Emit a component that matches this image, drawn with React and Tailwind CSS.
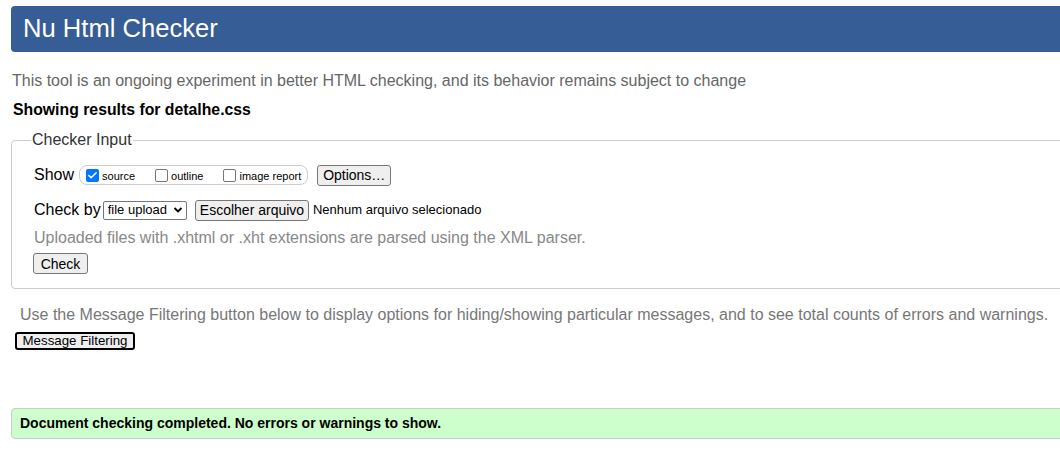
import { Check } from 'lucide-react'

const font = { fontFamily: '"Liberation Sans", Arial, sans-serif' }

const Checkbox = ({ checked, label }) => (
  <label className="flex items-center gap-[3px] text-[11px] text-black whitespace-nowrap">
    {checked ? (
      <span className="w-[13px] h-[13px] rounded-[2px] bg-[#0075ff] flex items-center justify-center">
        <Check className="w-[11px] h-[11px] text-white" strokeWidth={3.5} />
      </span>
    ) : (
      <span className="w-[13px] h-[13px] rounded-[2px] border border-[#767676] bg-white" />
    )}
    <span className="mt-[2px]">{label}</span>
  </label>
)

const Btn = ({ children, className = '' }) => (
  <span
    className={`inline-flex items-center justify-center whitespace-nowrap h-[21px] px-[6px] bg-[#efefef] border border-[#767676] rounded-[3px] text-black leading-none ${className}`}
  >
    {children}
  </span>
)

export default function App() {
  return (
    <div className="w-full h-[450px] overflow-hidden bg-white" style={font}>
      <div className="w-[1100px] pt-[6px]">
        {/* Header */}
        <div className="ml-[11px] h-[46px] bg-[#365d95] rounded-[4px] flex items-center pl-[12px]">
          <h1 className="text-[25.6px] text-white leading-none">Nu Html Checker</h1>
        </div>

        <p className="ml-[12px] mt-[19px] text-[16px] text-[#666] leading-[20px]">
          This tool is an ongoing experiment in better HTML checking, and its behavior remains subject to change
        </p>
        <p className="ml-[13px] mt-[9px] text-[15.8px] font-bold text-black leading-[20px]">
          Showing results for detalhe.css
        </p>

        {/* Checker input */}
        <fieldset className="ml-[11px] mt-[8px] border border-[#ccc] rounded-[4px] pl-[22px] pr-4 pb-[14px] pt-[12px]">
          <legend className="-ml-[3px] px-[1px] text-[16px] leading-[24px] text-[#333] whitespace-nowrap">
            Checker Input
          </legend>

          <div className="flex items-center h-[22px]">
            <span className="text-[16px] text-black mr-[5px]">Show</span>
            <div className="flex items-center h-[20px] border border-[#ccc] rounded-[8px] pl-[6px] pr-[6px] gap-[20px]">
              <Checkbox checked label="source" />
              <Checkbox label="outline" />
              <Checkbox label="image report" />
            </div>
            <Btn className="ml-[9px] w-[74px] text-[14px]">Options…</Btn>
          </div>

          <div className="flex items-center h-[22px] mt-[13px]">
            <span className="text-[16px] text-black mr-[2px] whitespace-nowrap">Check by</span>
            <span className="inline-flex items-center whitespace-nowrap h-[19px] border border-[#767676] rounded-[2px] pl-[4px] pr-[3px] text-[13px] text-black bg-white">
              file upload
              <svg className="ml-[6px] w-[10px] h-[10px]" viewBox="0 0 10 10">
                <path d="M1.5 3 L5 6.5 L8.5 3" fill="none" stroke="black" strokeWidth="1.8" />
              </svg>
            </span>
            <Btn className="ml-[8px] w-[114px] h-[20px] text-[14px]">Escolher arquivo</Btn>
            <span className="ml-[4px] text-[13px] text-black whitespace-nowrap">Nenhum arquivo selecionado</span>
          </div>

          <p className="mt-[7px] text-[16px] text-[#888] leading-[20px]">
            Uploaded files with .xhtml or .xht extensions are parsed using the XML parser.
          </p>

          <div className="mt-[5px] -ml-[1px] flex">
            <Btn className="w-[55px] h-[21px] text-[14px]">Check</Btn>
          </div>
        </fieldset>

        <p className="ml-[20px] mt-[16px] text-[16px] text-[#777] leading-[20px]">
          Use the Message Filtering button below to display options for hiding/showing particular messages, and to see total counts of errors and warnings.
        </p>
        <div className="ml-[15px] mt-[7px] flex">
          <span className="inline-flex items-center justify-center whitespace-nowrap h-[18px] w-[120px] bg-[#efefef] border-2 border-black rounded-[3px] text-[13.3px] leading-none text-black">
            Message Filtering
          </span>
        </div>

        <div className="ml-[11px] mt-[58px] h-[31px] bg-[#ccffcc] border border-[#ccc] rounded-[4px] flex items-center pl-[8px]">
          <span className="text-[14px] font-bold text-black">
            Document checking completed. No errors or warnings to show.
          </span>
        </div>
      </div>
    </div>
  )
}
